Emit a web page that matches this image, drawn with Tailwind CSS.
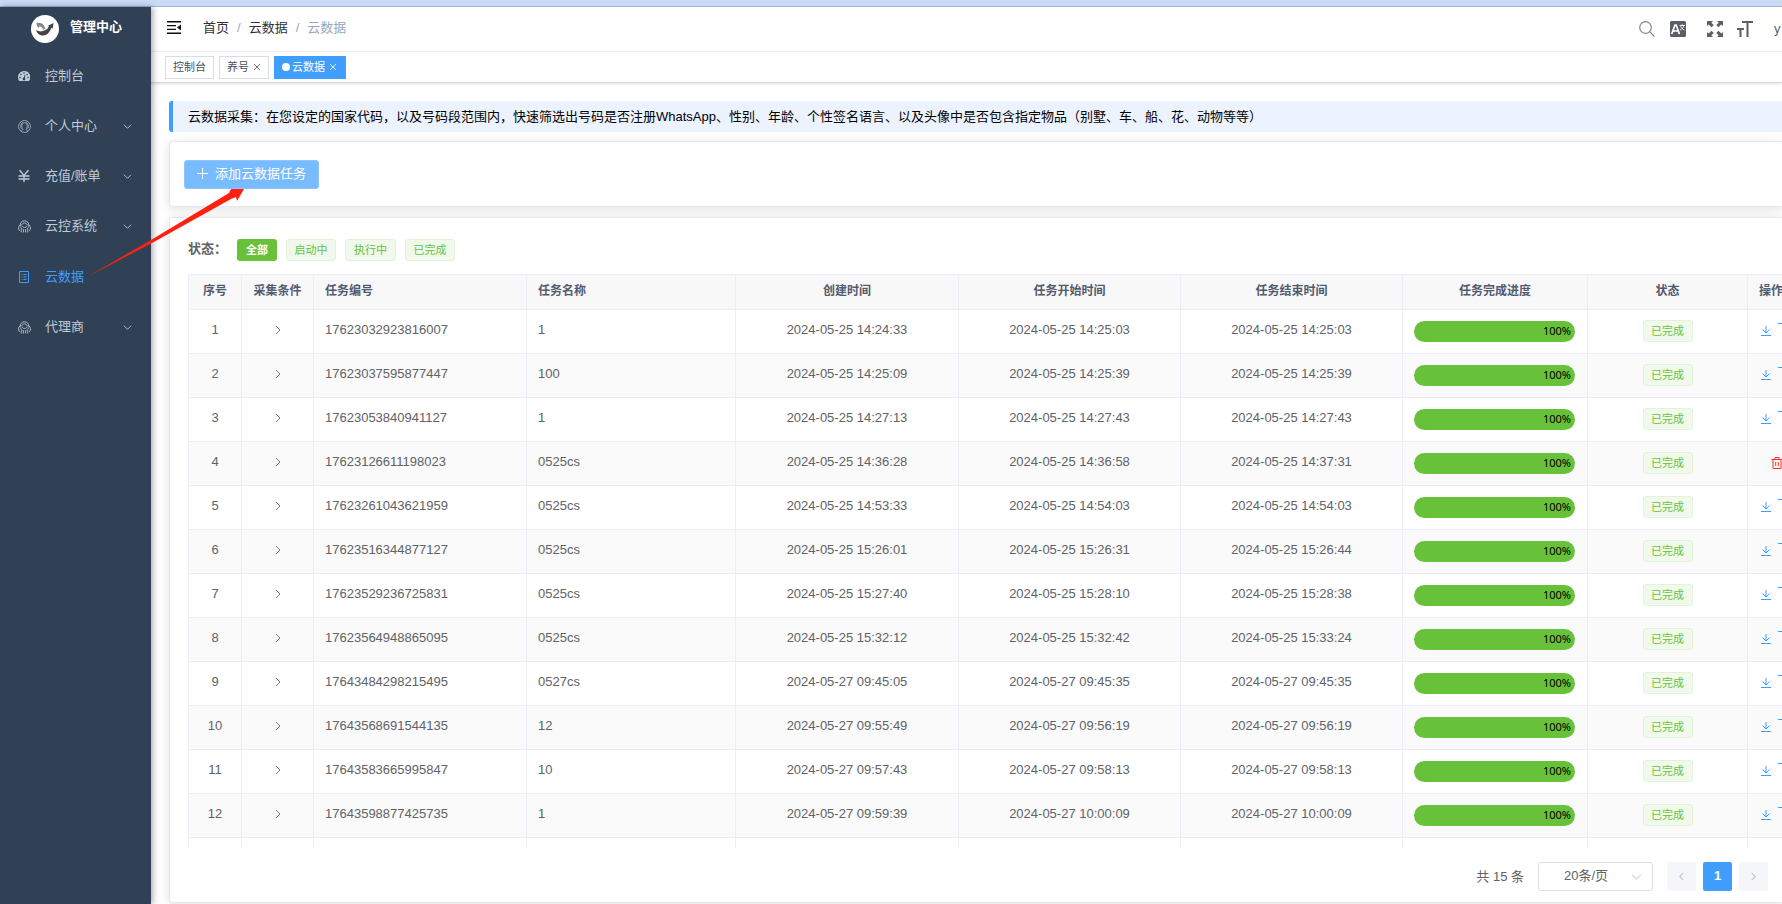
<!DOCTYPE html>
<html lang="zh-CN">
<head>
  <meta charset="UTF-8">
  <title>管理中心 - 云数据</title>
  <script src="https://cdn.jsdelivr.net/npm/@tailwindcss/browser@4"></script>
</head>
<body class="relative h-screen flex flex-col overflow-hidden bg-white text-[13px] text-[#606266] font-['Liberation_Sans','Noto_Sans_CJK_SC',sans-serif]">

  <div class="h-[7px] shrink-0 bg-[#cadbf5] border-b border-[#9fb2d0]"></div>

  <div class="flex flex-1 min-h-0">
    <!-- sidebar -->
    <aside class="relative z-10 w-[151px] shrink-0 bg-[#304156] text-[#bfcbd9] shadow-[2px_0_6px_rgba(0,21,41,0.35)]">
      <div class="h-11 pl-[31px] pb-1 flex items-center gap-[11px]">
        <svg class="size-7 mt-1" viewBox="0 0 28 28">
          <circle cx="14" cy="14" r="14" fill="#fff"/>
          <path d="M5 15c2 1 4 2 7 1 4-1 5-3 6-5l-2 .3L22.500 8l-.8 6-1.200-1.500C19 17 16 20.500 12 20.500c-4 0-6-2.500-7-5.500z" fill="#444"/>
          <path d="M5.500 8c3-.5 5.500 0 7 2l2 3.500-2 1.500c-1-2-2-3.500-4-3.500-1 0-1 1-.5 2-1.500-1-2.500-3-2.500-5.500z" fill="#888"/>
        </svg>
        <h1 class="text-white font-bold">管理中心</h1>
      </div>
      <nav>
        <a href="#" class="h-[50px] pl-[18px] pr-[19px] flex items-center">
          <svg class="size-3 mr-[15px]" viewBox="0 0 12 12"><path d="M6 1a6 6 0 0 0-6 6c0 1.500.4 2.900 1.200 4h9.600A6 6 0 0 0 6 1z" fill="currentColor"/><g fill="#304156"><circle cx="2" cy="7.500" r=".8"/><circle cx="3" cy="4.500" r=".8"/><circle cx="6" cy="3" r=".8"/><circle cx="9" cy="4.500" r=".8"/><circle cx="10" cy="7.500" r=".8"/><circle cx="6" cy="9" r="1.400"/></g><path d="M6 9l1-4" stroke="#304156"/></svg>
          <span>控制台</span>
        </a>
        <a href="#" class="h-[50px] pl-[18px] pr-[19px] flex items-center">
          <svg class="size-[13px] mr-[14px]" viewBox="0 0 24 24" fill="none" stroke="currentColor" stroke-width="1.300"><circle cx="12" cy="12" r="11"/><path d="M6 21c0-2 3-2 3-4C6 14 6 5 12 5s6 9 3 12c0 2 3 2 3 4M6 16C4 12 5 6 9 4M18 16c2-4 1-10-3-12"/></svg>
          <span class="flex-1">个人中心</span>
          <svg class="size-[9px]" viewBox="0 0 10 10" fill="none" stroke="currentColor"><path d="M1 3l4 4 4-4"/></svg>
        </a>
        <a href="#" class="h-[50px] pl-[18px] pr-[19px] flex items-center">
          <svg class="size-3 mr-[15px]" viewBox="0 0 12 12" fill="none" stroke="currentColor" stroke-width="1.400"><path d="M1.500 0L6 5.500 10.500 0M6 5.500V12M.5 6h11M.5 9h11"/></svg>
          <span class="flex-1">充值/账单</span>
          <svg class="size-[9px]" viewBox="0 0 10 10" fill="none" stroke="currentColor"><path d="M1 3l4 4 4-4"/></svg>
        </a>
        <a href="#" class="h-[50px] pl-[18px] pr-[19px] flex items-center">
          <svg class="size-[13px] mr-[14px]" viewBox="0 0 24 24" fill="none" stroke="currentColor" stroke-width="1.600"><path d="M4 11C4 5 7 1.500 12 1.500S20 5 20 11M4 9c-4 2-4 8-1 11M20 9c4 2 4 8 1 11M7 10c0-6 10-6 10 0M8 11c1 4 7 4 8 0M5 12c0 3 1 4 3 5M19 12c0 3-1 4-3 5M6 17v6M10 17v6M14 17v6M18 17v6"/></svg>
          <span class="flex-1">云控系统</span>
          <svg class="size-[9px]" viewBox="0 0 10 10" fill="none" stroke="currentColor"><path d="M1 3l4 4 4-4"/></svg>
        </a>
        <a href="#" class="h-[51px] pl-[18px] pr-[19px] flex items-center text-[#409eff]">
          <svg class="size-3 mr-[15px]" viewBox="0 0 12 12" fill="none" stroke="currentColor"><path d="M1.500.5h9v11h-9zM3.500 3.500h1M5.500 3.500h3M3.500 6h1M5.500 6h3M3.500 8.500h1M5.500 8.500h3"/></svg>
          <span>云数据</span>
        </a>
        <a href="#" class="h-[50px] pl-[18px] pr-[19px] flex items-center">
          <svg class="size-[13px] mr-[14px]" viewBox="0 0 24 24" fill="none" stroke="currentColor" stroke-width="1.600"><path d="M4 11C4 5 7 1.500 12 1.500S20 5 20 11M4 9c-4 2-4 8-1 11M20 9c4 2 4 8 1 11M7 10c0-6 10-6 10 0M8 11c1 4 7 4 8 0M5 12c0 3 1 4 3 5M19 12c0 3-1 4-3 5M6 17v6M10 17v6M14 17v6M18 17v6"/></svg>
          <span class="flex-1">代理商</span>
          <svg class="size-[9px]" viewBox="0 0 10 10" fill="none" stroke="currentColor"><path d="M1 3l4 4 4-4"/></svg>
        </a>
      </nav>
    </aside>

    <main class="flex-1 min-w-0 flex flex-col overflow-hidden">
      <!-- navbar -->
      <header class="h-[45px] shrink-0 flex items-center pl-4 border-b border-[#f0f0f0]">
        <button aria-label="折叠菜单">
          <svg class="w-[15px] h-[13px] -mt-1" viewBox="0 0 15 13" fill="#111"><path d="M0 0h14v1.500H0zM0 4h9v1.300H0zM0 7.700h9V9H0zM0 11.500h14V13H0zM14 3.500v6l-4-3z"/></svg>
        </button>
        <nav class="flex-1 pb-[2px] pl-[21px] flex items-center gap-2 text-[#303133]">
          <a href="#">首页</a><span class="text-[#a0a5b0]">/</span>
          <a href="#">云数据</a><span class="text-[#a0a5b0]">/</span>
          <span class="text-[#97a8be]">云数据</span>
        </nav>
        <div class="w-[143px] shrink-0 flex items-center text-[#5a5e66]">
          <button aria-label="搜索" class="mr-[15px]"><svg class="size-4" viewBox="0 0 16 16" fill="none" stroke="#888" stroke-width="1.200"><circle cx="6.500" cy="6.500" r="5.800"/><path d="M10.700 10.700l4.800 4.800"/></svg></button>
          <button aria-label="语言" class="mr-[21px]">
            <svg class="size-4" viewBox="0 0 16 16"><rect width="16" height="16" rx="1.500" fill="#5a5e66"/><path d="M1.700 13L5 4h1.200l3.200 9M3 10h5" fill="none" stroke="#fff" stroke-width="1.700"/><path d="M9.500 4.500h5.500M12.200 3v1.500M10 9c2-1 3.500-2.500 4-4.500M10.500 5c.7 2 2 3.200 4 4" fill="none" stroke="#fff" stroke-width=".8"/></svg>
          </button>
          <button aria-label="全屏" class="mr-[14px]">
            <svg class="size-4" viewBox="0 0 16 16" fill="currentColor"><path d="M0 0h6L4.300 1.700l2.400 2.400-2.100 2.100-2.900-2.600L0 5zM16 0h-6l1.700 1.700-2.400 2.400 2.100 2.100 2.900-2.600L16 5zM0 16h6l-1.700-1.700 2.400-2.400-2.100-2.100-2.900 2.600L0 11zM16 16h-6l1.700-1.700-2.400-2.400 2.100-2.100 2.900 2.600L16 11z"/></svg>
          </button>
          <button aria-label="字号" class="mr-[21px]"><svg class="size-4" viewBox="0 0 16 16" fill="currentColor"><path d="M5 0h11v2h-4.500v14h-2V2H5zM0 7h7v2H4.500v7h-2V9H0z"/></svg></button>
          <span>y</span>
        </div>
      </header>

      <!-- opened pages -->
      <div class="h-[31px] shrink-0 flex items-center gap-[5px] pl-[14px] text-[11px] text-[#495060] border-b border-[#d0d7e2] shadow-[0_1px_3px_rgba(0,0,0,0.12)]">
        <a href="#" class="h-[23px] px-[7px] border border-[#d8dce5] flex items-center">控制台</a>
        <a href="#" class="h-[23px] px-[7px] border border-[#d8dce5] flex items-center gap-1">养号
          <svg class="size-2" viewBox="0 0 8 8" fill="none" stroke="currentColor" stroke-width=".8"><path d="M1 1l6 6M7 1L1 7"/></svg></a>
        <a href="#" class="h-[23px] pl-2 pr-[9px] bg-[#409eff] text-white flex items-center">
          <span class="size-2 rounded-full bg-white mr-[2px]"></span>云数据
          <svg class="size-2 ml-1" viewBox="0 0 8 8" fill="none" stroke="currentColor" stroke-width=".8"><path d="M1 1l6 6M7 1L1 7"/></svg></a>
      </div>

      <section class="flex-1 min-h-0 flex flex-col pl-[18px] pt-[18px]">
        <p class="h-[31px] shrink-0 flex items-center pl-[15px] border-l-4 border-[#409eff] rounded-l-[3px] bg-[#ecf3ff] text-black whitespace-nowrap">云数据采集：在您设定的国家代码，以及号码段范围内，快速筛选出号码是否注册WhatsApp、性别、年龄、个性签名语言、以及头像中是否包含指定物品（别墅、车、船、花、动物等等）</p>

        <div class="mt-[9px] shrink-0 border border-r-0 border-[#e6e8ee] rounded-l-[4px] shadow-[0_2px_11px_rgba(0,0,0,0.12)] pl-[14px] pt-[18px] pb-[17px]">
          <button class="h-[29px] w-[135px] pb-[2px] flex items-center justify-center gap-[7px] bg-[#79bbff] border border-[#8cc5ff] rounded-[3px] text-white">
            <svg class="size-[11px]" viewBox="0 0 11 11" stroke="currentColor"><path d="M5.500 0v11M0 5.500h11"/></svg>添加云数据任务
          </button>
        </div>

        <div class="mt-[10px] mb-px flex-1 min-h-0 flex flex-col bg-white border border-r-0 border-[#e6e8ee] rounded-l-[4px] shadow-[0_2px_11px_rgba(0,0,0,0.12)] pl-[18px]">
          <div class="shrink-0 pt-[21px] pb-[13px] flex items-center text-[11px] text-[#67c23a]">
            <span class="w-[49px] pb-[2px] text-[13px] font-bold text-[#606266] whitespace-nowrap">状态：</span>
            <button class="h-[22px] w-10 rounded-[3px] bg-[#67c23a] text-white font-bold">全部</button>
            <button class="ml-[9px] h-[22px] w-[50px] rounded-[3px] bg-[#f0f9eb] border border-[#e1f3d8]">启动中</button>
            <button class="ml-[9px] h-[22px] w-[51px] rounded-[3px] bg-[#f0f9eb] border border-[#e1f3d8]">执行中</button>
            <button class="ml-[9px] h-[22px] w-[50px] rounded-[3px] bg-[#f0f9eb] border border-[#e1f3d8]">已完成</button>
          </div>

          <div class="flex-1 min-h-0 overflow-hidden">
            <table class="w-[1633px] table-fixed border-collapse border border-[#ebeef5]">
              <colgroup>
                <col class="w-[53px]"><col class="w-[72px]"><col class="w-[213px]"><col class="w-[209px]"><col class="w-[223px]"><col class="w-[222px]"><col class="w-[222px]"><col class="w-[185px]"><col class="w-[160px]"><col class="w-[74px]">
              </colgroup>
              <thead class="bg-[#f8f8f9] text-[12px] text-[#515a6e]">
                <tr class="h-[35px]">
                  <th class="pb-[3px] border border-[#ebeef5]">序号</th>
                  <th class="pb-[3px] border border-[#ebeef5]">采集条件</th>
                  <th class="pb-[3px] border border-[#ebeef5] pl-[11px] text-left">任务编号</th>
                  <th class="pb-[3px] border border-[#ebeef5] pl-[11px] text-left">任务名称</th>
                  <th class="pb-[3px] border border-[#ebeef5]">创建时间</th>
                  <th class="pb-[3px] border border-[#ebeef5]">任务开始时间</th>
                  <th class="pb-[3px] border border-[#ebeef5]">任务结束时间</th>
                  <th class="pb-[3px] border border-[#ebeef5]">任务完成进度</th>
                  <th class="pb-[3px] border border-[#ebeef5]">状态</th>
                  <th class="pb-[3px] border border-[#ebeef5] pl-[11px] text-left">操作</th>
                </tr>
              </thead>
              <tbody id="rows"></tbody>
            </table>
          </div>

          <div class="shrink-0 pt-[14px] pb-[11px] pr-[14px] flex items-center justify-end">
            <span class="mr-[14px]">共 15 条</span>
            <div class="relative mr-[14px]">
              <select aria-label="每页条数" class="appearance-none block h-[29px] w-[115px] pl-[25px] pb-[2px] border border-[#dcdfe6] rounded-[3px] bg-white"><option>20条/页</option><option>50条/页</option></select>
              <svg class="absolute right-3 top-[10px] size-[9px] pointer-events-none" viewBox="0 0 10 10" fill="none" stroke="#b4b8c0"><path d="M0 3l5 5 5-5"/></svg>
            </div>
            <button aria-label="上一页" class="size-[29px] flex items-center justify-center rounded-[2px] bg-[#f5f6fa] text-[#c0c4cc]"><svg class="size-[9px]" viewBox="0 0 10 10" fill="none" stroke="currentColor" stroke-width="1.200"><path d="M7 1L3 5l4 4"/></svg></button>
            <button class="mx-[7px] size-[29px] rounded-[2px] bg-[#409eff] text-white font-bold pb-[2px]">1</button>
            <button aria-label="下一页" class="size-[29px] flex items-center justify-center rounded-[2px] bg-[#f5f6fa] text-[#c0c4cc]"><svg class="size-[9px]" viewBox="0 0 10 10" fill="none" stroke="currentColor" stroke-width="1.200"><path d="M3 1l4 4-4 4"/></svg></button>
          </div>
        </div>
      </section>
    </main>
  </div>

  <!-- guide arrow from the menu entry to the add button -->
  <svg class="absolute z-20 left-[86px] top-[188px] w-[160px] h-[92px] pointer-events-none" viewBox="0 0 160 92" fill="#ff2010">
    <path d="M1 89L65 52 143 5 145 1h13l-7 12-1-4-5 2L66 55z"/>
  </svg>

<script>
const tasks = [
  ['17623032923816007', '1', '2024-05-25 14:24:33', '2024-05-25 14:25:03', '2024-05-25 14:25:03'],
  ['17623037595877447', '100', '2024-05-25 14:25:09', '2024-05-25 14:25:39', '2024-05-25 14:25:39'],
  ['17623053840941127', '1', '2024-05-25 14:27:13', '2024-05-25 14:27:43', '2024-05-25 14:27:43'],
  ['17623126611198023', '0525cs', '2024-05-25 14:36:28', '2024-05-25 14:36:58', '2024-05-25 14:37:31'],
  ['17623261043621959', '0525cs', '2024-05-25 14:53:33', '2024-05-25 14:54:03', '2024-05-25 14:54:03'],
  ['17623516344877127', '0525cs', '2024-05-25 15:26:01', '2024-05-25 15:26:31', '2024-05-25 15:26:44'],
  ['17623529236725831', '0525cs', '2024-05-25 15:27:40', '2024-05-25 15:28:10', '2024-05-25 15:28:38'],
  ['17623564948865095', '0525cs', '2024-05-25 15:32:12', '2024-05-25 15:32:42', '2024-05-25 15:33:24'],
  ['17643484298215495', '0527cs', '2024-05-27 09:45:05', '2024-05-27 09:45:35', '2024-05-27 09:45:35'],
  ['17643568691544135', '12', '2024-05-27 09:55:49', '2024-05-27 09:56:19', '2024-05-27 09:56:19'],
  ['17643583665995847', '10', '2024-05-27 09:57:43', '2024-05-27 09:58:13', '2024-05-27 09:58:13'],
  ['17643598877425735', '1', '2024-05-27 09:59:39', '2024-05-27 10:00:09', '2024-05-27 10:00:09'],
];

const trash = `<svg class="size-3" viewBox="0 0 11 12" fill="none" stroke="currentColor"><path d="M0 2.500h11M3.500 2V.5h4V2M1.500 2.500v9h8v-9M4.200 5v4M6.800 5v4"/></svg>`;

const rows = document.getElementById('rows');
tasks.forEach((t, i) => {
  const actions = i === 3
    ? `<button aria-label="删除" class="block ml-[23px] text-[#ff2d2d]">${trash}</button>`
    : `<div class="flex items-center pl-[13px]">
        <button aria-label="下载" class="text-[#409eff]"><svg class="size-[10px]" viewBox="0 0 10 10" fill="none" stroke="currentColor"><path d="M5 0v7M1.500 3.500L5 7l3.500-3.500M0 9.500h10"/></svg></button>
        <button aria-label="导出" class="ml-[7px] mb-1 text-[#409eff]"><svg class="size-[11px]" viewBox="0 0 11 11" fill="none" stroke="currentColor"><path d="M0 .5h11M5.500 .5v10"/></svg></button>
      </div>`;
  rows.innerHTML += `
    <tr class="h-11 even:bg-[#fafafa]">
      <td class="border border-[#ebeef5] pb-[3px] text-center">${i + 1}</td>
      <td class="border border-[#ebeef5] pb-[3px]"><button aria-label="展开" class="block mx-auto"><svg class="size-2" viewBox="0 0 8 8" fill="none" stroke="#666" stroke-width=".9"><path d="M2 0l4 4-4 4"/></svg></button></td>
      <td class="border border-[#ebeef5] pb-[3px] pl-[11px]">${t[0]}</td>
      <td class="border border-[#ebeef5] pb-[3px] pl-[11px]">${t[1]}</td>
      <td class="border border-[#ebeef5] pb-[3px] text-center">${t[2]}</td>
      <td class="border border-[#ebeef5] pb-[3px] text-center">${t[3]}</td>
      <td class="border border-[#ebeef5] pb-[3px] text-center">${t[4]}</td>
      <td class="border border-[#ebeef5] pb-px pl-[11px] pr-3"><div class="h-[21px] rounded-full bg-[#67c23a] pr-1 flex items-center justify-end text-[11px] text-black font-['Noto_Sans',sans-serif]">100%</div></td>
      <td class="border border-[#ebeef5] pb-px"><span class="mx-auto w-[50px] h-[22px] flex items-center justify-center rounded-[3px] border border-[#e1f3d8] bg-[#f0f9eb] text-[11px] text-[#67c23a]">已完成</span></td>
      <td class="border border-[#ebeef5] pb-[2px]">${actions}</td>
    </tr>`;
});
// next row is cut off by the scroll area
rows.innerHTML += `<tr class="h-11">${'<td class="border border-[#ebeef5]"></td>'.repeat(10)}</tr>`;
</script>
</body>
</html>
